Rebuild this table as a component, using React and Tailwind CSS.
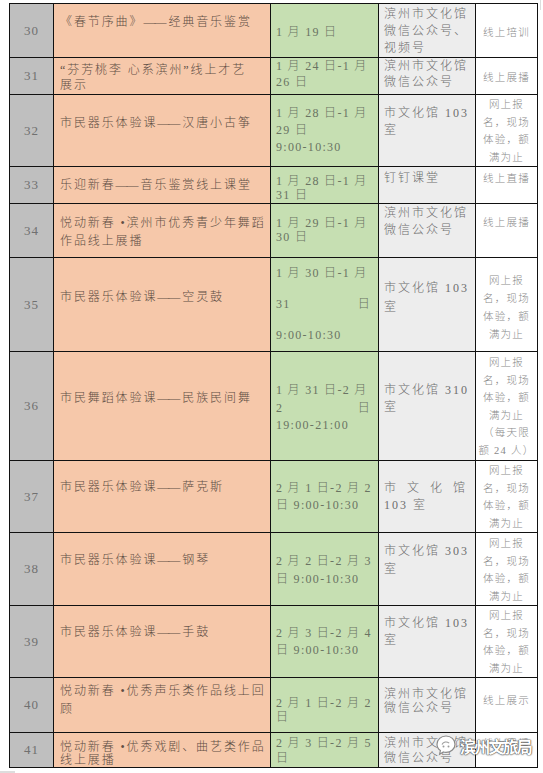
const fourLines = ['网上报', '名，现场', '体验，额', '满为止']

const rows = [
  {
    n: '30', h: 'h-[54px]',
    name: [['《春节序曲》——经典音乐鉴赏'], 'pt-[10px] leading-[17px]'],
    date: [['1 月 19 日'], 'pt-[20px] leading-[17px]'],
    loc: [['滨州市文化馆', '微信公众号、', '视频号'], 'pt-[2px] leading-[17px]'],
    fmt: [['线上培训'], 'pt-[20px] leading-[17px]'],
  },
  {
    n: '31', h: 'h-[37px]',
    name: [['“芬芳桃李 心系滨州”线上才艺', '展示'], 'pt-[5px] leading-[15px]'],
    date: [['1 月 24 日-1 月', '26 日'], 'pt-0 leading-[16px]'],
    loc: [['滨州市文化馆', '微信公众号'], 'pt-0 leading-[16px]'],
    fmt: [['线上展播'], 'pt-[11px] leading-[17px]'],
  },
  {
    n: '32', h: 'h-[72px]',
    name: [['市民器乐体验课——汉唐小古筝'], 'pt-[20px] leading-[17px]'],
    date: [['1 月 28 日-1 月', '29 日', '9:00-10:30'], 'pt-[10px] leading-[17px]'],
    loc: [['市文化馆 103', '室'], 'pt-[10px] leading-[17px]'],
    fmt: [fourLines, 'pt-[1px] leading-[17.5px]'],
  },
  {
    n: '33', h: 'h-[37px]',
    name: [['乐迎新春——音乐鉴赏线上课堂'], 'pt-[10px] leading-[17px]'],
    date: [['1 月 28 日-1 月', '31 日'], 'pt-[7px] leading-[14px]'],
    loc: [['钉钉课堂'], 'pt-[3px] leading-[17px]'],
    fmt: [['线上直播'], 'pt-[3px] leading-[17px]'],
  },
  {
    n: '34', h: 'h-[54px]',
    name: [['悦动新春 •滨州市优秀青少年舞蹈', '作品线上展播'], 'pt-[10px] leading-[18px]'],
    date: [['1 月 29 日-1 月', '30 日'], 'pt-[12px] leading-[14px]'],
    loc: [['滨州市文化馆', '微信公众号'], 'pt-[1px] leading-[17px]'],
    fmt: [['线上展播'], 'pt-[10px] leading-[17px]'],
  },
  {
    n: '35', h: 'h-[94px]',
    name: [['市民器乐体验课——空灵鼓'], 'pt-[31px] leading-[17px]'],
    date: [['1 月 30 日-1 月', ['31', '日'], '9:00-10:30'], 'pt-0 leading-[31px]'],
    loc: [['市文化馆 103', '室'], 'pt-[21px] leading-[19px]'],
    fmt: [fourLines, 'pt-[14px] leading-[18px]'],
  },
  {
    n: '36', h: 'h-[109px]',
    name: [['市民舞蹈体验课——民族民间舞'], 'pt-[38px] leading-[17px]'],
    date: [['1 月 31 日-2 月', ['2', '日'], '19:00-21:00'], 'pt-[30px] leading-[17.5px]'],
    loc: [['市文化馆 310', '室'], 'pt-[30px] leading-[17px]'],
    fmt: [[...fourLines, '（每天限', '额 24 人）'], 'pt-[2px] leading-[17.5px]'],
  },
  {
    n: '37', h: 'h-[72px]',
    name: [['市民器乐体验课——萨克斯'], 'pt-[18px] leading-[17px]'],
    date: [['2 月 1 日-2 月 2', '日 9:00-10:30'], 'pt-[19px] leading-[17px]'],
    loc: [[['市', '文', '化', '馆'], '103 室'], 'pt-[19px] leading-[17px]'],
    fmt: [fourLines, 'pt-[1px] leading-[17.5px]'],
  },
  {
    n: '38', h: 'h-[73px]',
    name: [['市民器乐体验课——钢琴'], 'pt-[19px] leading-[17px]'],
    date: [['2 月 2 日-2 月 3', '日 9:00-10:30'], 'pt-[19px] leading-[18px]'],
    loc: [['市文化馆 303', '室'], 'pt-[9px] leading-[18px]'],
    fmt: [fourLines, 'pt-[2px] leading-[17.5px]'],
  },
  {
    n: '39', h: 'h-[72px]',
    name: [['市民器乐体验课——手鼓'], 'pt-[18px] leading-[17px]'],
    date: [['2 月 3 日-2 月 4', '日 9:00-10:30'], 'pt-[19px] leading-[17px]'],
    loc: [['市文化馆 103', '室'], 'pt-[9px] leading-[17px]'],
    fmt: [fourLines, 'pt-[1px] leading-[17.5px]'],
  },
  {
    n: '40', h: 'h-[55px]',
    name: [['悦动新春 •优秀声乐类作品线上回', '顾'], 'pt-[4px] leading-[18px]'],
    date: [['2 月 1 日-2 月 2', '日'], 'pt-[18px] leading-[14px]'],
    loc: [['滨州市文化馆', '微信公众号'], 'pt-[9px] leading-[14px]'],
    fmt: [['线上展示'], 'pt-[14px] leading-[17px]'],
  },
  {
    n: '41', h: 'h-[35px]',
    name: [['悦动新春 •优秀戏剧、曲艺类作品', '线上展播'], 'pt-[8px] leading-[13px]'],
    date: [['2 月 3 日-2 月 5', '日'], 'pt-[3px] leading-[15px]'],
    loc: [['滨州市文化馆', '微信公众号'], 'pt-[3px] leading-[15px]'],
    fmt: [['线上展播'], 'pt-[2px] leading-[17px]'],
  },
]

// keep the long dash as text, but close the gap so it reads as one rule
const withDash = (s) => {
  const parts = s.split('——')
  if (parts.length === 1) return s
  return (
    <>
      {parts[0]}
      <span className="tracking-[-1px] mr-[3px]">——</span>
      {parts[1]}
    </>
  )
}

const Lines = ({ lines }) =>
  lines.map((l, i) =>
    Array.isArray(l) ? (
      <div key={i} className="flex justify-between">
        {l.map((p, j) => (
          <span key={j}>{p}</span>
        ))}
      </div>
    ) : (
      <div key={i} className="whitespace-nowrap">
        {withDash(l)}
      </div>
    )
  )

const Watermark = () => (
  <div className="absolute left-[434px] top-[733px] flex items-center gap-[2px]">
    <svg width="24" height="26" viewBox="0 0 24 26">
      <path
        d="M12 3c-5 0-9 3.6-9 8.2 0 2.6 1.3 4.9 3.4 6.4l-.8 3.6 3.8-2.2c.8.2 1.7.3 2.6.3 5 0 9-3.6 9-8.1S17 3 12 3z"
        fill="#fff"
        stroke="#8a8a8a"
        strokeWidth="1.2"
      />
      <path d="M8 11.5c1.2-2.6 4.6-3.4 7.2-1.4" fill="none" stroke="#9a9a9a" strokeWidth="1.1" />
      <circle cx="9.5" cy="13.5" r="1" fill="#9a9a9a" />
      <circle cx="14.5" cy="13.5" r="1" fill="#9a9a9a" />
    </svg>
    <span className="font-['Noto_Sans_CJK_SC',sans-serif] text-[16px] font-bold leading-none tracking-[-1.8px] text-white [text-shadow:0_0_1px_#444,0_0_1px_#444,0_0_2px_#666]">
      滨州文旅局
    </span>
  </div>
)

export default function App() {
  return (
    <div className="relative w-[543px] h-[773px] overflow-hidden bg-white font-['Liberation_Serif','Noto_Sans_CJK_SC',serif]">
      <div className="ml-[9px] mt-[3px] w-[529px] border-l border-t border-[#111]">
        {rows.map((r) => (
          <div key={r.n} className={`grid grid-cols-[44px_217px_108px_97px_62px] grid-rows-1 ${r.h}`}>
            <div className="flex items-center justify-center border-r border-b border-[#111] bg-[#bfbfbf] text-[13px] tracking-[1px] text-[#707070]">
              {r.n}
            </div>
            <div className={`border-r border-b border-[#111] bg-[#f6c8aa] pl-[6px] text-[12px] font-light tracking-[1.9px] text-[#5e4e44] ${r.name[1]}`}>
              <Lines lines={r.name[0]} />
            </div>
            <div className={`border-r border-b border-[#111] bg-[#c6dfb2] pl-[5px] pr-[7px] text-[12px] font-light tracking-[1.3px] text-[#6a7363] ${r.date[1]}`}>
              <Lines lines={r.date[0]} />
            </div>
            <div className={`border-r border-b border-[#111] bg-[#ededed] pl-[5px] pr-[8px] text-[12px] font-light tracking-[2px] text-[#6e6e6e] ${r.loc[1]}`}>
              <Lines lines={r.loc[0]} />
            </div>
            <div className={`border-r border-b border-[#111] bg-white text-center text-[10.5px] font-light tracking-[1.25px] text-[#8a8a8a] ${r.fmt[1]}`}>
              <Lines lines={r.fmt[0]} />
            </div>
          </div>
        ))}
      </div>
      <Watermark />
      <div className="absolute left-0 bottom-0 w-[15px] h-[2px] bg-[#ddd]" />
      <div className="absolute right-[2px] top-0 w-[1px] h-[10px] bg-[#ddd]" />
    </div>
  )
}
